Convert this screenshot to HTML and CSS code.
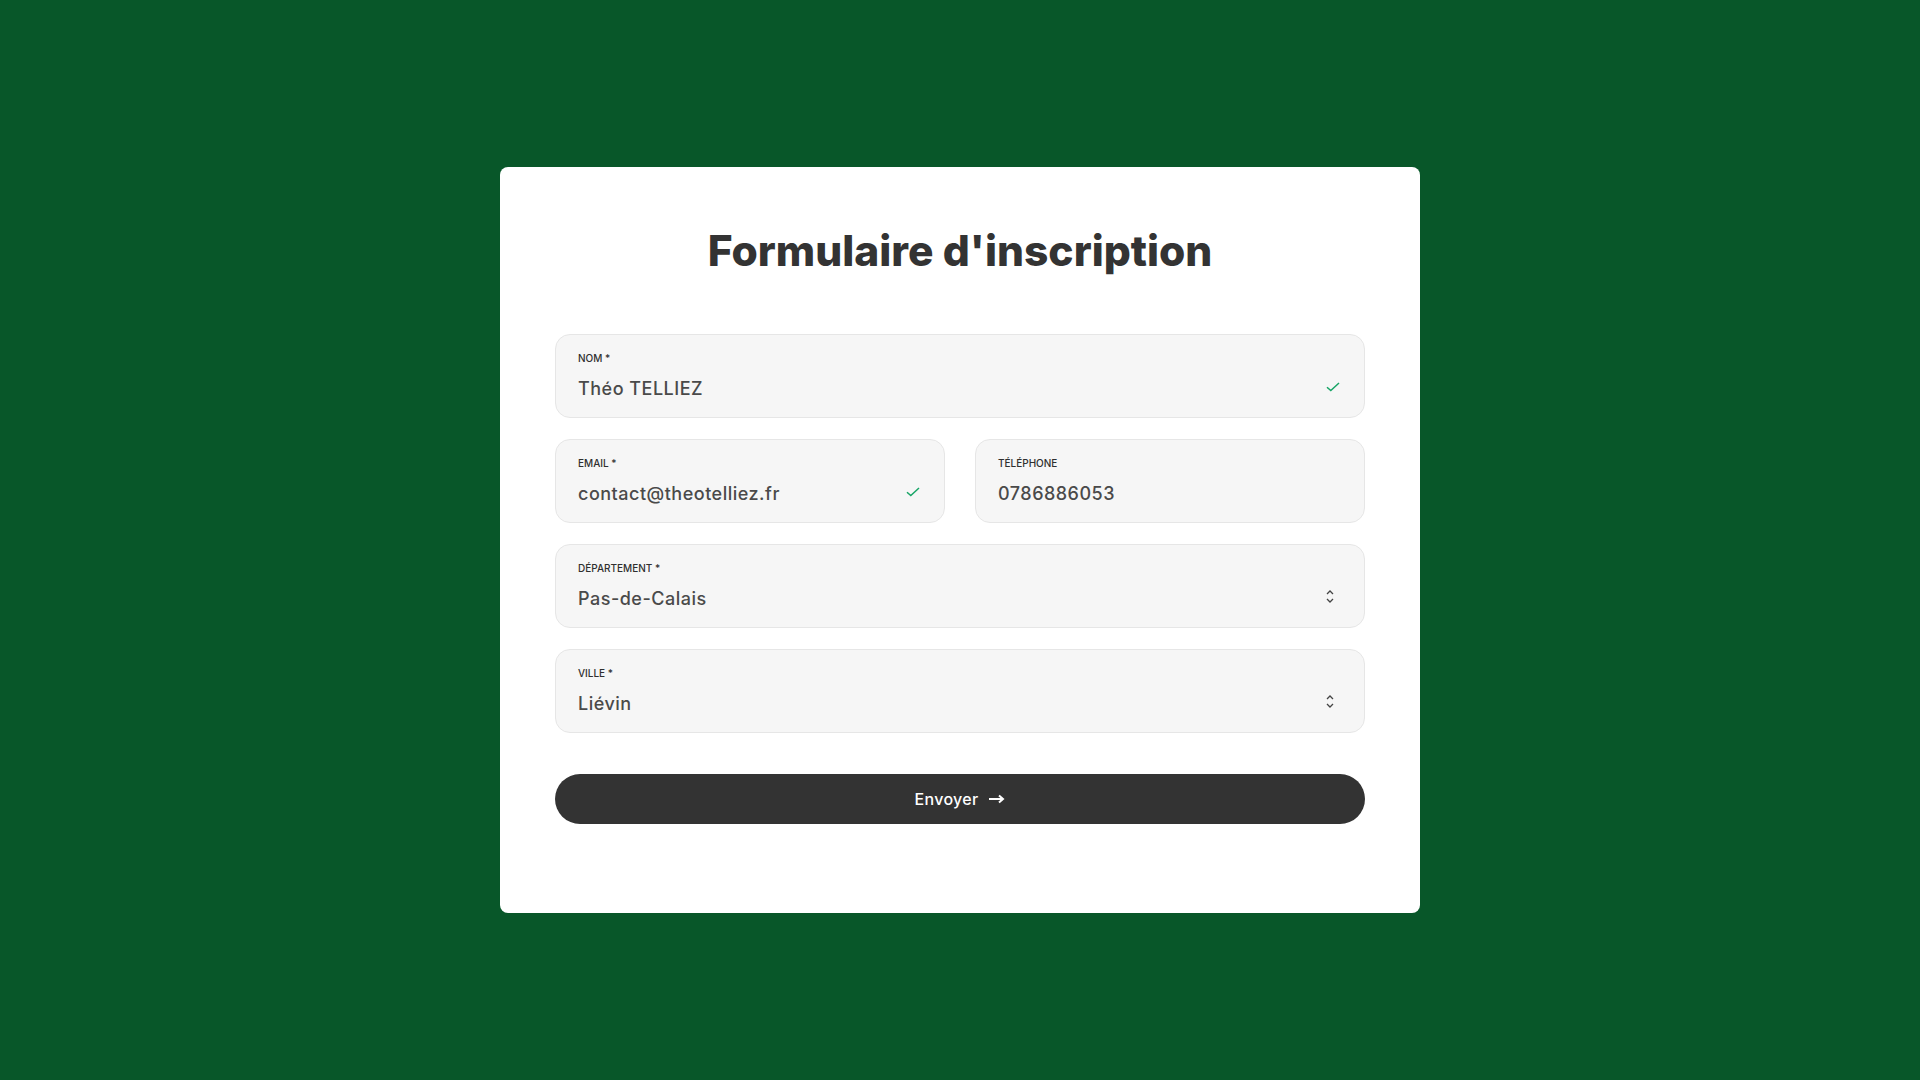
FILE: index.html
```html
<!DOCTYPE html>
<html lang="fr">
<head>
<meta charset="utf-8">
<title>Formulaire d'inscription</title>
<link rel="stylesheet" href="styles.css">
</head>
<body>
<main class="page">
  <form class="card">
    <h1 class="title">Formulaire d'inscription</h1>
    <div class="fields">
      <div class="field">
        <div class="field-body">
          <span class="label">Nom *</span>
          <span class="value">Théo TELLIEZ</span>
        </div>
        <svg class="check" viewBox="0 0 14 10" width="14" height="10"><path d="M1 5.2 L4.8 8.6 L13 1" fill="none" stroke="#17a566" stroke-width="1.5"/></svg>
      </div>
      <div class="row">
        <div class="field">
          <div class="field-body">
            <span class="label">Email *</span>
            <span class="value">contact@theotelliez.fr</span>
          </div>
          <svg class="check" viewBox="0 0 14 10" width="14" height="10"><path d="M1 5.2 L4.8 8.6 L13 1" fill="none" stroke="#17a566" stroke-width="1.5"/></svg>
        </div>
        <div class="field">
          <div class="field-body">
            <span class="label">Téléphone</span>
            <span class="value">0786886053</span>
          </div>
        </div>
      </div>
      <div class="field">
        <div class="field-body">
          <span class="label">Département *</span>
          <span class="value">Pas-de-Calais</span>
        </div>
        <svg class="chevrons" viewBox="0 0 8 13" width="8" height="13"><path d="M1 4 L4 1 L7 4 M1 9 L4 12 L7 9" fill="none" stroke="#444" stroke-width="1.3"/></svg>
      </div>
      <div class="field">
        <div class="field-body">
          <span class="label">Ville *</span>
          <span class="value">Liévin</span>
        </div>
        <svg class="chevrons" viewBox="0 0 8 13" width="8" height="13"><path d="M1 4 L4 1 L7 4 M1 9 L4 12 L7 9" fill="none" stroke="#444" stroke-width="1.3"/></svg>
      </div>
    </div>
    <button class="submit" type="button">Envoyer <svg class="arrow" viewBox="0 0 17 10" width="17" height="10"><path d="M1 5 H15 M11 1.5 L15 5 L11 8.5" fill="none" stroke="#fff" stroke-width="2"/></svg></button>
  </form>
</main>
</body>
</html>
```
FILE: styles.css
```css
* { box-sizing: border-box; }
html, body { margin: 0; padding: 0; }
body {
  background: #085729;
  font-family: Inter, "Noto Sans", sans-serif;
  color: #333;
}
.page {
  min-height: 1080px;
  display: flex;
  justify-content: center;
  padding-top: 167px;
}
.card {
  width: 920px;
  height: 746px;
  background: #fff;
  border-radius: 8px;
  padding: 60px 55px 0;
  display: flex;
  flex-direction: column;
}
.title {
  margin: 0;
  text-align: center;
  font-size: 42.5px;
  line-height: 48px;
  font-weight: 800;
  color: #333;
  letter-spacing: 0;
}
.fields {
  margin-top: 59px;
  display: flex;
  flex-direction: column;
  gap: 21px;
}
.row {
  display: grid;
  grid-template-columns: 1fr 1fr;
  gap: 30px;
}
.field {
  height: 84px;
  background: #f6f6f6;
  border: 1px solid #e6e6e6;
  border-radius: 15px;
  padding: 0 22px;
  display: flex;
  align-items: center;
}
.field-body {
  flex: 1;
  display: flex;
  flex-direction: column;
  margin-top: -1px;
}
.label {
  font-size: 10px;
  line-height: 14px;
  font-weight: 500;
  text-transform: uppercase;
  color: #2f2f2f;
}
.value {
  margin-top: 13.5px;
  font-size: 18px;
  line-height: 22px;
  font-weight: 500;
  color: #4a4a4a;
  letter-spacing: 0.5px;
}
.check { margin-top: 22px; margin-right: 2px; }
.chevrons { margin-top: 20px; margin-right: 8px; }
.submit {
  margin-top: 41px;
  height: 50px;
  border: none;
  border-radius: 25px;
  background: #333;
  color: #fff;
  font-family: Inter, "Noto Sans", sans-serif;
  font-size: 16px;
  font-weight: 500;
  letter-spacing: 0.3px;
  display: flex;
  align-items: center;
  justify-content: center;
  gap: 10px;
}
```
